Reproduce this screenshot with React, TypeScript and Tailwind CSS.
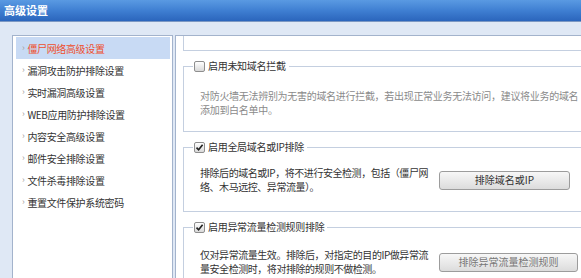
import React from "react";

const menu = [
  "僵尸网络高级设置",
  "漏洞攻击防护排除设置",
  "实时漏洞高级设置",
  "WEB应用防护排除设置",
  "内容安全高级设置",
  "邮件安全排除设置",
  "文件杀毒排除设置",
  "重置文件保护系统密码",
];

function Check({ checked }: { checked?: boolean }) {
  return (
    <span className="inline-flex h-[11px] w-[11px] shrink-0 items-center justify-center rounded-[2px] border border-[#8e8e8e] bg-gradient-to-b from-white to-[#d9d9d9]">
      {checked && (
        <svg width="9" height="9" viewBox="0 0 9 9">
          <path d="M1.5 4.6 L3.6 6.8 L7.6 1.8" fill="none" stroke="#222" strokeWidth="1.6" />
        </svg>
      )}
    </span>
  );
}

function Legend({ label, checked }: { label: string; checked?: boolean }) {
  return (
    <legend className="ml-[9px] flex h-[14px] items-center gap-[3px] pr-[3px] pl-[1px] text-[10px] leading-[14px] tracking-[-0.3px] text-[#333]">
      <Check checked={checked} />
      {label}
    </legend>
  );
}

function Btn({ children, faded }: { children: React.ReactNode; faded?: boolean }) {
  return (
    <button
      className={`flex h-[19px] shrink-0 items-center justify-center rounded-[3px] border border-[#9c9c9c] bg-gradient-to-b from-[#f7f7f7] to-[#dcdcdc] text-[10px] leading-none ${
        faded ? "w-[139px] text-[#777]" : "w-[131px] text-[#333]"
      }`}
    >
      {children}
    </button>
  );
}

export default function App() {
  return (
    <div
      className="h-[278px] w-[581px] overflow-hidden bg-[#dfe8f5]"
      style={{ fontFamily: '"Noto Sans CJK SC", "Noto Sans", sans-serif' }}
    >
      <div className="flex h-[22px] items-center border-b border-[#7c98c3] bg-gradient-to-b from-[#5a9ae2] via-[#3f7fd2] to-[#2b65bc] pl-[4px] text-[11px] font-bold text-white">
        高级设置
      </div>
      <div className="flex pt-[13px] pl-[12px]">
        <div className="h-[260px] w-[161px] shrink-0 border border-[#a3b3cc] bg-white pt-[1px] pr-[2px] pl-[3px]">
          {menu.map((m, i) => (
            <div
              key={m}
              className={`flex h-[22px] items-center pl-[6px] text-[10px] tracking-[-0.35px] ${
                i === 0 ? "bg-[#c8daf4] text-[#ef4f2c]" : "text-[#333]"
              }`}
            >
              <span className="mr-[3px] text-[9px] text-[#a0a0a0]">›</span>
              {m}
            </div>
          ))}
        </div>
        <div className="ml-[2px] h-[260px] w-[430px] shrink-0 border-t border-l border-[#a3b3cc] bg-white pl-[7px]">
          <div className="h-[15px] w-[400px] border-x border-b border-[#c4cfe0]" />

          <fieldset className="mt-[8px] w-[400px] border border-[#c4cfe0]">
            <Legend label="启用未知域名拦截" />
            <div className="whitespace-nowrap pt-[16px] pb-[14px] pl-[16px] text-[10px] leading-[14px] tracking-[-0.3px] text-[#8a8a8a]">
              对防火墙无法辨别为无害的域名进行拦截，若出现正常业务无法访问，建议将业务的域名
              <br />
              添加到白名单中。
            </div>
          </fieldset>

          <fieldset className="mt-[8px] w-[400px] border border-[#c4cfe0]">
            <Legend label="启用全局域名或IP排除" checked />
            <div className="flex items-center pt-[12px] pb-[17px] pl-[16px]">
              <div className="w-[239px] whitespace-nowrap text-[10px] leading-[14px] tracking-[-0.45px] text-[#333]">
                排除后的域名或IP，将不进行安全检测，包括（僵尸网
                <br />
                络、木马远控、异常流量）。
              </div>
              <Btn>排除域名或IP</Btn>
            </div>
          </fieldset>

          <fieldset className="mt-[8px] w-[400px] border border-[#c4cfe0]">
            <Legend label="启用异常流量检测规则排除" checked />
            <div className="flex items-center pt-[14px] pb-[17px] pl-[16px]">
              <div className="w-[239px] whitespace-nowrap text-[10px] leading-[14px] tracking-[-0.45px] text-[#333]">
                仅对异常流量生效。排除后，对指定的目的IP做异常流
                <br />
                量安全检测时，将对排除的规则不做检测。
              </div>
              <Btn faded>排除异常流量检测规则</Btn>
            </div>
          </fieldset>
        </div>
      </div>
    </div>
  );
}
